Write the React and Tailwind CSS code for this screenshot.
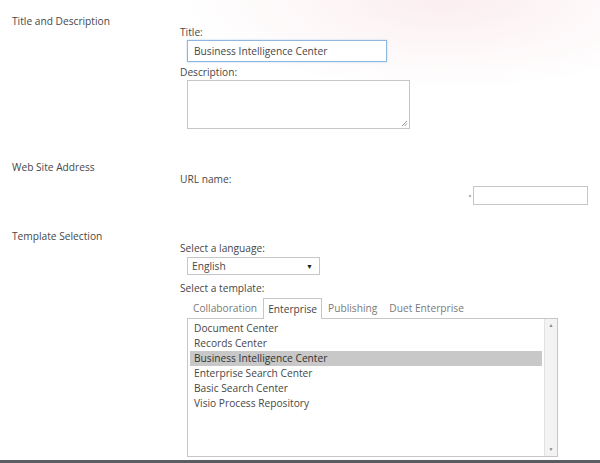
import React from "react";

const templates = [
  "Document Center",
  "Records Center",
  "Business Intelligence Center",
  "Enterprise Search Center",
  "Basic Search Center",
  "Visio Process Repository",
];

const tabs = ["Collaboration", "Enterprise", "Publishing", "Duet Enterprise"];

function Section({ label, labelPad, rightPad, height, children }) {
  return (
    <div className={`flex ${height}`}>
      <div className={`w-[180px] shrink-0 pl-3 ${labelPad}`}>{label}</div>
      <div className={`flex-1 flex flex-col ${rightPad}`}>{children}</div>
    </div>
  );
}

export default function App() {
  const selected = "Business Intelligence Center";
  const activeTab = "Enterprise";
  return (
    <div className="w-[600px] h-[463px] overflow-hidden flex flex-col bg-[radial-gradient(ellipse_260px_90px_at_74%_0%,#fbedf0_0%,#fdf6f7_45%,#ffffff_100%)] font-['Open_Sans',sans-serif] text-[10.2px] leading-[14px] text-[#474747]">
      <Section label="Title and Description" labelPad="pt-[14px]" rightPad="pt-[25px]" height="h-[150px]">
        <div>Title:</div>
        <div className="ml-[7px] mt-[1px] w-[200px] h-[22px] border border-[#8fb6dc] shadow-[0_0_2px_#bcd5ee] bg-white flex items-center px-[6px]">
          Business Intelligence Center
        </div>
        <div className="mt-[3px]">Description:</div>
        <div className="ml-[7px] mt-[1px] w-[223px] h-[49px] border border-[#c6c6c6] bg-white relative">
          <svg className="absolute right-[1px] bottom-[1px]" width="7" height="7" viewBox="0 0 7 7">
            <path d="M6 1 L1 6 M6 3.5 L3.5 6" stroke="#9a9a9a" strokeWidth="1" />
          </svg>
        </div>
      </Section>

      <Section label="Web Site Address" labelPad="pt-[10px]" rightPad="pt-[22px]" height="h-[70px]">
        <div>URL name:</div>
        <div className="flex items-center justify-end pr-3">
          <span className="w-[2px] h-[2px] bg-[#b0b0b0] mr-[2px]" />
          <div className="w-[115px] h-[19px] border border-[#c6c6c6] bg-white" />
        </div>
      </Section>

      <Section label="Template Selection" labelPad="pt-[9px]" rightPad="pt-[21px]" height="h-[240px]">
        <div>Select a language:</div>
        <div className="ml-[7px] mt-[2px] w-[133px] h-[18px] border border-[#c6c6c6] bg-white flex items-center justify-between px-[4px]">
          <span>English</span>
          <span className="text-[7px] leading-none text-[#222] mr-[2px]">▼</span>
        </div>
        <div className="mt-[6px]">Select a template:</div>
        <div className="ml-[7px] mt-[3px] flex h-[20px] relative z-10">
          {tabs.map((t) => (
            <div
              key={t}
              className={
                t === activeTab
                  ? "px-[4px] h-[21px] flex items-center border border-b-0 border-[#c6c6c6] bg-white text-[#444]"
                  : "px-[6px] h-[20px] flex items-center text-[#7a7a7a]"
              }
            >
              {t}
            </div>
          ))}
        </div>
        <div className="ml-[7px] w-[371px] h-[139px] border border-[#c6c6c6] bg-white flex">
          <div className="flex-1 pl-[2px] pt-[2px]">
            {templates.map((t) => (
              <div
                key={t}
                className={`h-[15px] leading-[15px] pl-[4px] ${t === selected ? "bg-[#c8c8c8] text-[#333]" : ""}`}
              >
                {t}
              </div>
            ))}
          </div>
          <div className="w-[13px] ml-[2px] bg-[#f3f3f3] border-l border-[#e2e2e2] flex flex-col justify-between items-center py-[4px]">
            <span className="text-[5px] leading-none text-[#888]">▲</span>
            <span className="text-[5px] leading-none text-[#888]">▼</span>
          </div>
        </div>
      </Section>

      <div className="mt-auto h-[3px] bg-[#5a5e62]" />
    </div>
  );
}
